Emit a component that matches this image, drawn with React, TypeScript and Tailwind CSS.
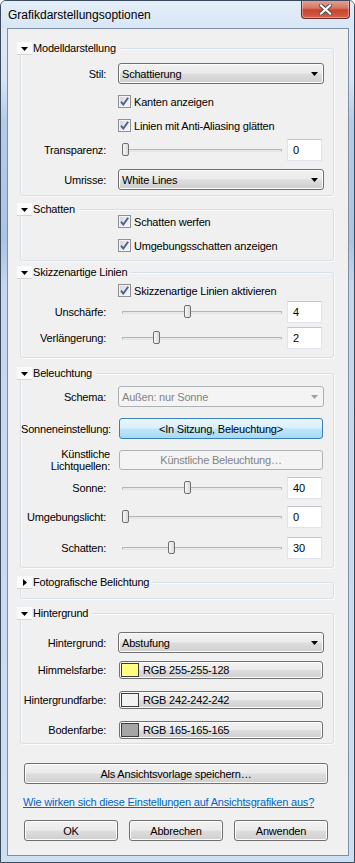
import React from "react";

const F = "font-['Segoe_UI','Liberation_Sans',Arial,sans-serif]";
const BTN =
  "border-[#707070] bg-[linear-gradient(#f2f2f2,#ebebeb_48%,#dddddd_52%,#cfcfcf)] shadow-[inset_0_0_0_1px_#fcfcfc]";

const DownArrow = ({ color = "#000" }: { color?: string }) => (
  <svg width="7" height="4" viewBox="0 0 7 4">
    <path d="M0 0H7L3.5 4Z" fill={color} />
  </svg>
);

const Label = ({ children, className = "" }: { children: React.ReactNode; className?: string }) => (
  <div className={`w-[85px] shrink-0 whitespace-nowrap text-right ${className}`}>{children}</div>
);

const Combo = ({ value, disabled = false }: { value: string; disabled?: boolean }) => (
  <div
    className={`ml-[12px] flex h-[21px] w-[206px] items-center justify-between rounded-[3px] border pl-[3px] pr-[5px] ${
      disabled ? "border-[#adb2b5] bg-[#f4f4f4] text-[#838383]" : BTN
    }`}
  >
    <span>{value}</span>
    <DownArrow color={disabled ? "#a0a0a0" : "#000"} />
  </div>
);

const Checkbox = () => (
  <div className="flex h-[13px] w-[13px] shrink-0 items-center justify-center border border-[#8e8f8f] bg-[linear-gradient(135deg,#d2d5da,#fbfbfb)] shadow-[inset_0_0_0_1px_#f4f4f4]">
    <svg width="9" height="9" viewBox="0 0 9 9">
      <path d="M1 4.6L3.3 7.6L8.2 0.8" stroke="#4a5f8e" strokeWidth="1.8" fill="none" />
    </svg>
  </div>
);

const CheckRow = ({ label, className = "" }: { label: string; className?: string }) => (
  <div className={`flex h-[13px] items-center pl-[97px] ${className}`}>
    <Checkbox />
    <span className="ml-[3px] whitespace-nowrap">{label}</span>
  </div>
);

const Slider = ({ frac }: { frac: number }) => (
  <div className="relative ml-[16px] h-[22px] w-[160px]">
    <div className="absolute left-0 right-0 top-[10px] h-[3px] rounded-[1px] border border-[#b4b4b4] border-b-[#e4e4e4] bg-[#e7eaea]" />
    <div
      className="absolute top-[4px] h-[13px] w-[7px] rounded-[2px] border border-[#6f6f6f] bg-[linear-gradient(90deg,#f7f7f7,#d9d9d9)]"
      style={{ left: Math.round(frac * 154) }}
    />
  </div>
);

const NumBox = ({ value }: { value: string }) => (
  <div className="ml-[5px] h-[22px] w-[35px] border border-[#e2e3ea] border-t-[#c2c5cc] bg-white pl-[5px] pt-[3px]">
    {value}
  </div>
);

const SliderRow = ({
  label,
  value,
  frac,
  className = "",
}: {
  label: string;
  value: string;
  frac: number;
  className?: string;
}) => (
  <div className={`flex h-[22px] items-center ${className}`}>
    <Label>{label}</Label>
    <Slider frac={frac} />
    <NumBox value={value} />
  </div>
);

function Section({
  title,
  open = true,
  className = "",
  children,
}: {
  title: string;
  open?: boolean;
  className?: string;
  children?: React.ReactNode;
}) {
  return (
    <div className={`relative w-[314px] ${className}`}>
      <div className="rounded-[3px] border border-[#d5dfe5] shadow-[inset_1px_1px_0_#fbfbfb,1px_1px_0_#fbfbfb]">
        {children}
      </div>
      {/* header sits on the top border */}
      <div className="absolute left-[-3px] top-[-7px] flex h-[14px] items-center bg-[#f0f0f0] pr-[4px]">
        <div className="flex h-[13px] w-[15px] items-center justify-center border-b border-[#d4d4d4] bg-[#fbfbfb] pt-[2px]">
          {open ? (
            <DownArrow />
          ) : (
            <svg width="4" height="7" viewBox="0 0 4 7">
              <path d="M0 0L4 3.5L0 7Z" fill="#000" />
            </svg>
          )}
        </div>
        <span className="ml-[1px] whitespace-nowrap">{title}</span>
      </div>
    </div>
  );
}

export default function App() {
  const colors = [
    { label: "Himmelsfarbe:", color: "#ffff80", text: "RGB 255-255-128", mt: "mt-[8px]" },
    { label: "Hintergrundfarbe:", color: "#f2f2f2", text: "RGB 242-242-242", mt: "mt-[12px]" },
    { label: "Bodenfarbe:", color: "#a5a5a5", text: "RGB 165-165-165", mt: "mt-[12px]" },
  ];

  return (
    <div className={`${F} text-[11px] leading-[14px] tracking-[-0.2px] text-black`}>
      <div className="h-[863px] w-[355px] overflow-hidden rounded-t-[6px] border border-[#3b4a5c] bg-[linear-gradient(180deg,#e2ecf7_0%,#d8e5f4_9%,#b3cce9_14%,#a9c5e6_28%,#c4d7ee_33%,#cddff2_100%)]">
        {/* TITLE BAR */}
        <div className="flex h-[27px] items-start bg-[linear-gradient(180deg,#e4eef8,#d8e6f5)]">
          <span className="ml-[7px] mt-[7px] text-[12px] leading-[15px] tracking-normal">Grafikdarstellungsoptionen</span>
          <div className="-mt-px ml-auto mr-[4px] flex h-[19px] w-[49px] items-center justify-center rounded-b-[4px] border border-t-0 border-[#6b2b25] bg-[linear-gradient(#e8a597,#d47563_45%,#c7432f_55%,#d2634d)] shadow-[inset_0_0_0_1px_rgba(255,255,255,0.35)]">
            <svg width="13" height="11" viewBox="0 0 13 11">
              <path d="M2 1.5L11 9.5M11 1.5L2 9.5" stroke="#4a4a4a" strokeWidth="4" strokeLinecap="square" />
              <path d="M2 1.5L11 9.5M11 1.5L2 9.5" stroke="#ffffff" strokeWidth="2.2" strokeLinecap="square" />
            </svg>
          </div>
        </div>

        {/* CLIENT AREA */}
        <div className="ml-[6px] w-[342px] border border-[#7d8fa4] bg-[#f0f0f0] pb-[14px] pl-[12px]">
          {/* MODELLDARSTELLUNG */}
          <Section title="Modelldarstellung" className="mt-[19px]">
            <div className="pb-[5px] pt-[14px]">
              <div className="flex h-[21px] items-center">
                <Label>Stil:</Label>
                <Combo value="Schattierung" />
              </div>
              <CheckRow label="Kanten anzeigen" className="mt-[11px]" />
              <CheckRow label="Linien mit Anti-Aliasing glätten" className="mt-[11px]" />
              <SliderRow label="Transparenz:" value="0" frac={0} className="mt-[7px]" />
              <div className="mt-[8px] flex h-[21px] items-center">
                <Label>Umrisse:</Label>
                <Combo value="White Lines" />
              </div>
            </div>
          </Section>

          {/* SCHATTEN */}
          <Section title="Schatten" className="mt-[13px]">
            <div className="pb-[8px] pt-[5px]">
              <CheckRow label="Schatten werfen" />
              <CheckRow label="Umgebungsschatten anzeigen" className="mt-[11px]" />
            </div>
          </Section>

          {/* SKIZZENARTIGE LINIEN */}
          <Section title="Skizzenartige Linien" className="mt-[11px]">
            <div className="pb-[8px] pt-[11px]">
              <CheckRow label="Skizzenartige Linien aktivieren" />
              <SliderRow label="Unschärfe:" value="4" frac={0.4} className="mt-[4px]" />
              <SliderRow label="Verlängerung:" value="2" frac={0.2} className="mt-[4px]" />
            </div>
          </Section>

          {/* BELEUCHTUNG */}
          <Section title="Beleuchtung" className="mt-[15px]">
            <div className="pb-[8px] pt-[12px]">
              <div className="flex h-[21px] items-center">
                <Label>Schema:</Label>
                <Combo value="Außen: nur Sonne" disabled />
              </div>
              <div className="mt-[11px] flex h-[21px] items-center">
                <Label>Sonneneinstellung:</Label>
                <div className="ml-[13px] flex h-[21px] w-[204px] items-center justify-center rounded-[3px] border border-[#3c7fb1] bg-[linear-gradient(#eaf6fd,#d9f0fc_48%,#bee6fd_52%,#a7d9f5)]">
                  &lt;In Sitzung, Beleuchtung&gt;
                </div>
              </div>
              <div className="mt-[11px] flex h-[20px] items-center">
                <Label className="w-[89px] whitespace-normal leading-[12px]">
                  Künstliche
                  <br />
                  Lichtquellen:
                </Label>
                <div className="ml-[9px] flex h-[20px] w-[204px] items-center justify-center rounded-[3px] border border-[#adb2b5] bg-[#f4f4f4] text-[#838383]">
                  Künstliche Beleuchtung…
                </div>
              </div>
              <SliderRow label="Sonne:" value="40" frac={0.4} className="mt-[7px]" />
              <SliderRow label="Umgebungslicht:" value="0" frac={0} className="mt-[7px]" />
              <SliderRow label="Schatten:" value="30" frac={0.3} className="mt-[9px]" />
            </div>
          </Section>

          {/* FOTOGRAFISCHE BELICHTUNG */}
          <Section title="Fotografische Belichtung" open={false} className="mt-[14px]">
            <div className="h-[15px]" />
          </Section>

          {/* HINTERGRUND */}
          <Section title="Hintergrund" className="mt-[14px]">
            <div className="pb-[4px] pt-[18px]">
              <div className="flex h-[21px] items-center">
                <Label>Hintergrund:</Label>
                <Combo value="Abstufung" />
              </div>
              {colors.map((c) => (
                <div key={c.label} className={`flex h-[18px] items-center ${c.mt}`}>
                  <Label>{c.label}</Label>
                  <div className={`ml-[13px] flex h-[18px] w-[204px] items-center rounded-[3px] border pl-[1px] ${BTN}`}>
                    <div className="h-[14px] w-[18px] border border-[#3c3c3c]" style={{ background: c.color }} />
                    <span className="ml-[4px]">{c.text}</span>
                  </div>
                </div>
              ))}
            </div>
          </Section>

          {/* BOTTOM */}
          <div className={`ml-[4px] mt-[19px] flex h-[21px] w-[304px] items-center justify-center rounded-[3px] border ${BTN}`}>
            Als Ansichtsvorlage speichern…
          </div>
          <div className="ml-[3px] mt-[11px] h-[14px] whitespace-nowrap text-[#0066cc] underline">
            Wie wirken sich diese Einstellungen auf Ansichtsgrafiken aus?
          </div>
          <div className="ml-[4px] mt-[11px] flex gap-[11px]">
            {["OK", "Abbrechen", "Anwenden"].map((b) => (
              <div key={b} className={`flex h-[21px] w-[94px] items-center justify-center rounded-[3px] border ${BTN}`}>
                {b}
              </div>
            ))}
          </div>
        </div>
      </div>
    </div>
  );
}
